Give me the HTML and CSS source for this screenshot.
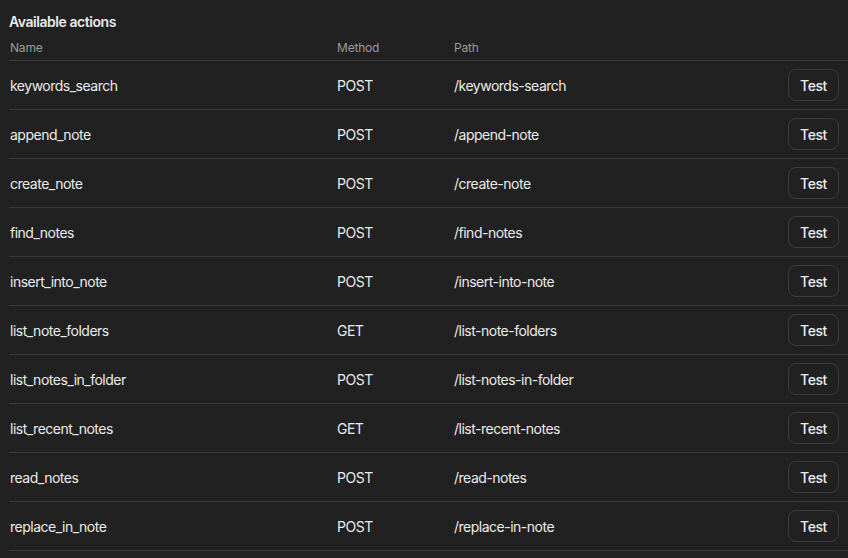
FILE: index.html
```html
<!DOCTYPE html>
<html>
<head>
<meta charset="utf-8">
<link rel="stylesheet" href="styles.css">
</head>
<body>
<div class="panel">
  <div class="title">Available actions</div>
  <div class="table">
    <div class="row head">
      <div class="c name">Name</div>
      <div class="c method">Method</div>
      <div class="c path">Path</div>
      <div class="c act"></div>
    </div>
    <div class="row"><div class="c name">keywords_search</div><div class="c method">POST</div><div class="c path">/keywords-search</div><div class="c act"><button class="btn">Test</button></div></div>
    <div class="row"><div class="c name">append_note</div><div class="c method">POST</div><div class="c path">/append-note</div><div class="c act"><button class="btn">Test</button></div></div>
    <div class="row"><div class="c name">create_note</div><div class="c method">POST</div><div class="c path">/create-note</div><div class="c act"><button class="btn">Test</button></div></div>
    <div class="row"><div class="c name">find_notes</div><div class="c method">POST</div><div class="c path">/find-notes</div><div class="c act"><button class="btn">Test</button></div></div>
    <div class="row"><div class="c name">insert_into_note</div><div class="c method">POST</div><div class="c path">/insert-into-note</div><div class="c act"><button class="btn">Test</button></div></div>
    <div class="row"><div class="c name">list_note_folders</div><div class="c method">GET</div><div class="c path">/list-note-folders</div><div class="c act"><button class="btn">Test</button></div></div>
    <div class="row"><div class="c name">list_notes_in_folder</div><div class="c method">POST</div><div class="c path">/list-notes-in-folder</div><div class="c act"><button class="btn">Test</button></div></div>
    <div class="row"><div class="c name">list_recent_notes</div><div class="c method">GET</div><div class="c path">/list-recent-notes</div><div class="c act"><button class="btn">Test</button></div></div>
    <div class="row"><div class="c name">read_notes</div><div class="c method">POST</div><div class="c path">/read-notes</div><div class="c act"><button class="btn">Test</button></div></div>
    <div class="row"><div class="c name">replace_in_note</div><div class="c method">POST</div><div class="c path">/replace-in-note</div><div class="c act"><button class="btn">Test</button></div></div>
  </div>
</div>
</body>
</html>
```
FILE: styles.css
```css
html, body {
  margin: 0;
  padding: 0;
  background: #212121;
  overflow: hidden;
}
body {
  font-family: Inter, "Noto Sans", sans-serif;
  color: #ececec;
  font-size: 14px;
  letter-spacing: -0.5px;
}
.panel {
  padding: 13px 0 0 9px;
}
.title {
  font-size: 14px;
  font-weight: 600;
  line-height: 18px;
  color: #ececec;
  letter-spacing: -0.45px;
}
.table {
  display: flex;
  flex-direction: column;
}
.row {
  display: grid;
  grid-template-columns: 327px 117px 1fr 80px;
  align-items: center;
  border-bottom: 1px solid #3a3a3a;
  height: 49px;
  box-sizing: border-box;
}
.row.head {
  height: 30px;
  padding-top: 8px;
  align-items: start;
  font-size: 12px;
  color: #9b9b9b;
  letter-spacing: -0.2px;
}
.c {
  padding-left: 1px;
  padding-top: 2px;
  line-height: 18px;
}
.head .c {
  line-height: 16px;
  padding-top: 1px;
}
.act {
  display: flex;
  justify-content: flex-end;
  padding-right: 9px;
  padding-top: 0;
}
.btn {
  font-family: Inter, "Noto Sans", sans-serif;
  font-size: 14px;
  font-weight: 500;
  letter-spacing: -0.4px;
  color: #ececec;
  background: transparent;
  border: 1px solid #3d3d3d;
  border-radius: 8px;
  width: 51px;
  height: 32px;
  padding: 0;
}
```
